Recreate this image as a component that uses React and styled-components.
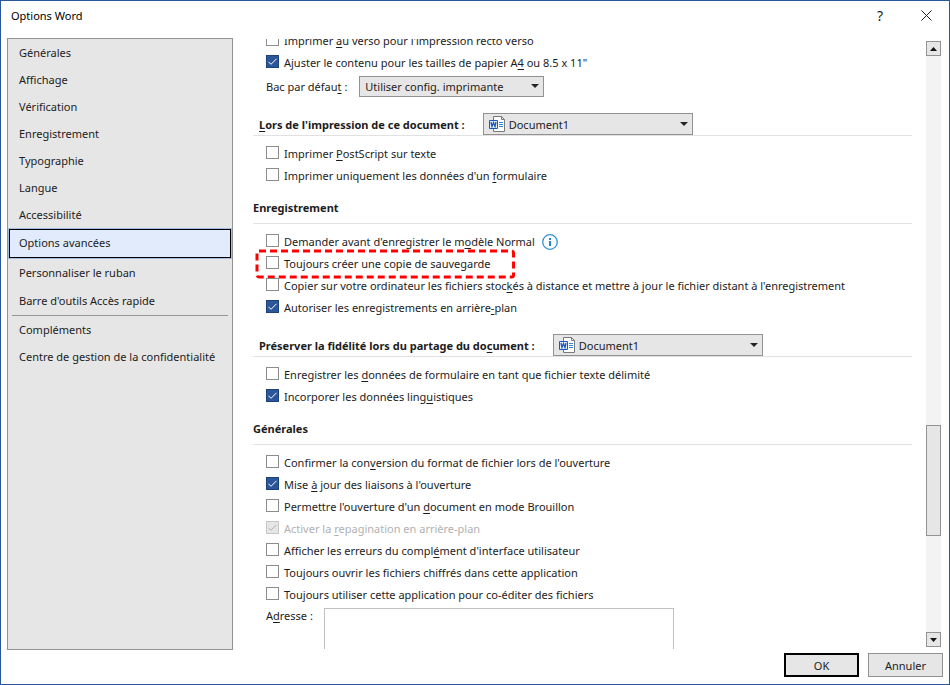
import { useLayoutEffect, useRef } from 'react';
import styled, { createGlobalStyle } from 'styled-components';

const navGroups = [
  {
    items: [
      'Générales',
      'Affichage',
      'Vérification',
      'Enregistrement',
      'Typographie',
      'Langue',
      'Accessibilité',
      'Options avancées',
    ],
  },
  { tall: true, items: ['Personnaliser le ruban', "Barre d'outils Accès rapide"] },
  {
    divided: true,
    items: ['Compléments', 'Centre de gestion de la confidentialité'],
  },
];

// "_x_" marks the access key of a label
function Label({ text }) {
  const [before, key, after] = text.split('_');
  return (
    <span>
      {before}
      {key && <u>{key}</u>}
      {after}
    </span>
  );
}

function Check({ text, checked, disabled, highlighted, info }) {
  return (
    <CheckRow>
      <CheckLabel $disabled={disabled}>
        <Box type="checkbox" defaultChecked={checked} disabled={disabled} />
        <Tick viewBox="0 0 13 13" $disabled={disabled}>
          <path d="M2.5 6.8 L5 9.3 L10.5 3.8" />
        </Tick>
        <Label text={text} />
        {highlighted && (
          <Highlight>
            <rect x="2" y="2" rx="2" />
          </Highlight>
        )}
      </CheckLabel>
      {info && <InfoIcon />}
    </CheckRow>
  );
}

function InfoIcon() {
  return (
    <svg width="16" height="16" viewBox="0 0 16 16">
      <circle cx="8" cy="8" r="7.3" fill="#fff" stroke="#2e93d1" strokeWidth="1.3" />
      <path d="M7 4h2v2H7zM7 7h2v5H7z" fill="#1e88cf" />
    </svg>
  );
}

function WordIcon() {
  return (
    <DocIcon viewBox="0 0 16 16">
      <path d="M4.5 .5h8l3 3v12h-11z" fill="#fff" stroke="#7a7a7a" />
      <path d="M12.5 .5v3h3" fill="none" stroke="#7a7a7a" />
      <path d="M10 6.5h4M10 8.5h4M10 10.5h4" stroke="#2b8ade" />
      <path d="M.5 4.5h8v8h-8z" fill="#e8f0fb" stroke="#185abd" />
      <path d="M2 6l1 4.5 1.5-4 1.5 4 1-4.5" fill="none" stroke="#185abd" strokeWidth="1.3" />
    </DocIcon>
  );
}

function DropDown({ id, value, width, doc }) {
  return (
    <SelectWrap $width={width}>
      <Select id={id} $doc={doc}>
        <option>{value}</option>
      </Select>
      {doc && <WordIcon />}
      <Caret viewBox="0 0 8 4">
        <path d="M0 0h8l-4 4z" fill="#262626" />
      </Caret>
    </SelectWrap>
  );
}

function App() {
  const pane = useRef(null);

  useLayoutEffect(() => {
    pane.current.scrollTop = 9;
  }, []);

  return (
    <Dialog>
      <GlobalStyle />
      <TitleBar>
        <Title>Options Word</Title>
        <TitleButton aria-label="Aide">?</TitleButton>
        <TitleButton aria-label="Fermer">
          <svg width="11" height="11" viewBox="0 0 11 11">
            <path d="M.5 .5l10 10M10.5 .5l-10 10" stroke="#262626" />
          </svg>
        </TitleButton>
      </TitleBar>

      <Body>
        <Nav>
          {navGroups.map((group) => (
            <NavGroup key={group.items[0]} $divided={group.divided}>
              {group.items.map((item) => (
                <NavItem
                  key={item}
                  $tall={group.tall}
                  $active={item === 'Options avancées'}
                >
                  {item}
                </NavItem>
              ))}
            </NavGroup>
          ))}
        </Nav>

        <Pane ref={pane}>
          <Rows>
            <Check text="Imprimer _a_u verso pour l'impression recto verso" />
            <Check
              text={'Ajuster le contenu pour les tailles de papier A_4_ ou 8.5 x 11"'}
              checked
            />
            <TrayRow>
              <label htmlFor="tray">
                <Label text="Bac par défau_t_ :" />
              </label>
              <DropDown id="tray" value="Utiliser config. imprimante" width={185} />
            </TrayRow>
          </Rows>

          <DocHeading>
            <label htmlFor="print-doc">
              <Label text="_L_ors de l'impression de ce document :" />
            </label>
            <DropDown id="print-doc" value="Document1" width={210} doc />
          </DocHeading>
          <Rows>
            <Check text="Imprimer _P_ostScript sur texte" />
            <Check text="Imprimer uniquement les données d'un _f_ormulaire" />
          </Rows>

          <Heading>Enregistrement</Heading>
          <Rows>
            <Check text="Demander avant d'enregistrer le m_o_dèle Normal" info />
            <Check text="Tou_j_ours créer une copie de sauvegarde" highlighted />
            <Check text="Copier sur votre ordinateur les fichiers stoc_k_és à distance et mettre à jour le fichier distant à l'enregistrement" />
            <Check text="Autoriser les enregistrements en arrière_-_plan" checked />
          </Rows>

          <DocHeading>
            <label htmlFor="share-doc">
              <Label text="Préserver la fidélité lors du partage du do_c_ument :" />
            </label>
            <DropDown id="share-doc" value="Document1" width={210} doc />
          </DocHeading>
          <Rows>
            <Check text="Enregistrer les _d_onnées de formulaire en tant que fichier texte délimité" />
            <Check text="Incorporer les données ling_u_istiques" checked />
          </Rows>

          <Heading>Générales</Heading>
          <Rows>
            <Check text="Confirmer la con_v_ersion du format de fichier lors de l'ouverture" />
            <Check text="Mise _à_ jour des liaisons à l'ouverture" checked />
            <Check text="Permettre l'ouverture d'un _d_ocument en mode Brouillon" />
            <Check text="Activer la _r_epagination en arrière-plan" checked disabled />
            <Check text="Afficher les erreurs du compl_é_ment d'interface utilisateur" />
            <Check text="Toujours ouvrir les fichiers chiffrés dans cette application" />
            <Check text="Toujours utiliser cette application pour co-éditer des fichiers" />
            <AddressRow>
              <label htmlFor="address">
                <Label text="A_d_resse :" />
              </label>
              <Address id="address" />
            </AddressRow>
          </Rows>
        </Pane>

        <ScrollBar>
          <ScrollButton aria-label="Défiler vers le haut">
            <svg width="7" height="4" viewBox="0 0 7 4">
              <path d="M0 4h7l-3.5-4z" fill="#111" />
            </svg>
          </ScrollButton>
          <Track $grow={369} />
          <Thumb />
          <Track $grow={96} />
          <ScrollButton aria-label="Défiler vers le bas">
            <svg width="7" height="4" viewBox="0 0 7 4">
              <path d="M0 0h7l-3.5 4z" fill="#111" />
            </svg>
          </ScrollButton>
        </ScrollBar>
      </Body>

      <Footer>
        <FooterButton $primary>OK</FooterButton>
        <FooterButton>Annuler</FooterButton>
      </Footer>
    </Dialog>
  );
}

const GlobalStyle = createGlobalStyle`
  * {
    box-sizing: border-box;
  }

  body {
    margin: 0;
  }

  body, button, select, textarea {
    font-family: 'Noto Sans', 'Open Sans', sans-serif;
    font-size: 11px;
    color: #1c1c1c;
  }

  u {
    text-underline-offset: 2px;
  }
`;

const Dialog = styled.div`
  display: flex;
  flex-direction: column;
  height: 100vh;
  border: 1px solid #2b579a;
  background: #ffffff;
`;

const TitleBar = styled.header`
  display: flex;
  align-items: center;
  height: 37px;
  padding: 0 0 8px 10px;
`;

const Title = styled.h1`
  flex: 1;
  margin: 0;
  font-size: 11px;
  font-weight: 400;
  color: #000000;
`;

const TitleButton = styled.button`
  display: flex;
  align-items: center;
  justify-content: center;
  width: 46px;
  height: 29px;
  padding: 0;
  border: none;
  background: none;
  font-size: 14px;
`;

const Body = styled.div`
  flex: 1;
  display: flex;
  min-height: 0;
  padding: 0 8px 0 6px;
`;

const Nav = styled.nav`
  width: 226px;
  padding: 1px;
  border: 1px solid #929292;
  background: #e6e6e6;
`;

const NavGroup = styled.div`
  display: flex;
  flex-direction: column;
  margin: ${({ $divided }) => ($divided ? '0 3px' : '0')};
  padding-top: ${({ $divided }) => ($divided ? '1px' : '0')};
  border-top: ${({ $divided }) => ($divided ? '1px solid #979797' : 'none')};

  & > button {
    padding-left: ${({ $divided }) => ($divided ? '7px' : '10px')};
  }
`;

const NavItem = styled.button`
  height: ${({ $tall, $active }) => ($active ? 29 : $tall ? 28 : 27)}px;
  margin-bottom: ${({ $active }) => ($active ? '1px' : '0')};
  padding: 0 0 2px;
  border: none;
  outline: ${({ $active }) => ($active ? '1px solid #000000' : 'none')};
  outline-offset: -1px;
  box-shadow: ${({ $active }) => ($active ? '0 0 0 1px #a3bde3' : 'none')};
  background: ${({ $active }) => ($active ? '#e2ebfb' : 'none')};
  text-align: left;
  white-space: nowrap;
`;

const Pane = styled.main`
  flex: 1;
  min-width: 0;
  margin: 1px 14px 1px 20px;
  overflow-y: scroll;
  scrollbar-width: none;
`;

const Rows = styled.div`
  padding: 0 0 0 13px;

  h2 + & {
    padding-top: 7px;
  }
`;

const CheckRow = styled.div`
  display: flex;
  align-items: center;
  gap: 7px;
  height: 22px;
  white-space: nowrap;
`;

const CheckLabel = styled.label`
  position: relative;
  display: flex;
  align-items: center;
  gap: 5px;
  height: 22px;
  color: ${({ $disabled }) => ($disabled ? '#b1b1b1' : 'inherit')};

  span {
    padding-bottom: 2px;
  }
`;

const Box = styled.input`
  appearance: none;
  width: 13px;
  height: 13px;
  margin: 0 0 3px;
  border: 1px solid #8c8c8c;
  background: #ffffff;

  &:checked {
    border-color: #1c4279;
    background: #2b579a;
  }

  &:disabled {
    border-color: #c6c6c6;
    background: #e6e6e6;
  }
`;

const Tick = styled.svg`
  position: absolute;
  top: 3px;
  left: 0;
  width: 13px;
  height: 13px;
  fill: none;
  stroke: ${({ $disabled }) => ($disabled ? '#b1b1b1' : '#ffffff')};
  pointer-events: none;
`;

const Highlight = styled.svg`
  position: absolute;
  top: -4px;
  left: -11px;
  width: calc(100% + 36px);
  height: 30px;
  pointer-events: none;

  rect {
    width: calc(100% - 4px);
    height: calc(100% - 4px);
    fill: none;
    stroke: #fe0000;
    stroke-width: 3px;
    stroke-dasharray: 7 4;
  }
`;

const TrayRow = styled.div`
  display: flex;
  align-items: center;
  gap: 12px;
  height: 24px;

  select {
    height: 21px;
  }
`;

const Heading = styled.h2`
  margin: 0;
  padding-top: 6px;
  border-bottom: 1px solid #e1e1e1;
  font-size: 11px;
  line-height: 30px;
`;

const DocHeading = styled.h2`
  display: flex;
  align-items: center;
  gap: 18px;
  margin: 0;
  padding: 15px 0 0 6px;
  border-bottom: 1px solid #e1e1e1;
  font-size: 11px;
  white-space: nowrap;
`;

const SelectWrap = styled.div`
  position: relative;
  display: flex;
  align-items: center;
  width: ${({ $width }) => $width}px;
`;

const Select = styled.select`
  appearance: none;
  width: 100%;
  height: 22px;
  padding: 0 20px 0 ${({ $doc }) => ($doc ? 25 : 5)}px;
  border: 1px solid #929292;
  border-radius: 0;
  background: #e6e6e6;
`;

const DocIcon = styled.svg`
  position: absolute;
  left: 6px;
  width: 16px;
  height: 16px;
  pointer-events: none;
`;

const Caret = styled.svg`
  position: absolute;
  right: 5px;
  width: 8px;
  height: 4px;
  pointer-events: none;
`;

const AddressRow = styled.div`
  display: flex;
  gap: 11px;
  padding-top: 2px;
`;

const Address = styled.textarea`
  width: 350px;
  height: 64px;
  border: 1px solid #c0c0c0;
  resize: none;
`;

const ScrollBar = styled.div`
  display: flex;
  flex-direction: column;
  width: 15px;
  margin: 3px 0;
`;

const ScrollButton = styled.button`
  display: flex;
  align-items: center;
  justify-content: center;
  width: 15px;
  height: 15px;
  padding: 0;
  border: 1px solid #929292;
  background: #e6e6e6;
`;

const Track = styled.div`
  flex: ${({ $grow }) => $grow};
  background: #f3f3f3;
`;

const Thumb = styled.div`
  flex: 109;
  border: 1px solid #929292;
  background: #e6e6e6;
`;

const Footer = styled.footer`
  display: flex;
  justify-content: flex-end;
  gap: 9px;
  padding: 3px 6px 7px;
`;

const FooterButton = styled.button`
  width: 75px;
  height: 24px;
  padding: 0;
  border: ${({ $primary }) => ($primary ? '2px solid #000000' : '1px solid #929292')};
  background: #e6e6e6;
`;

export default App;
